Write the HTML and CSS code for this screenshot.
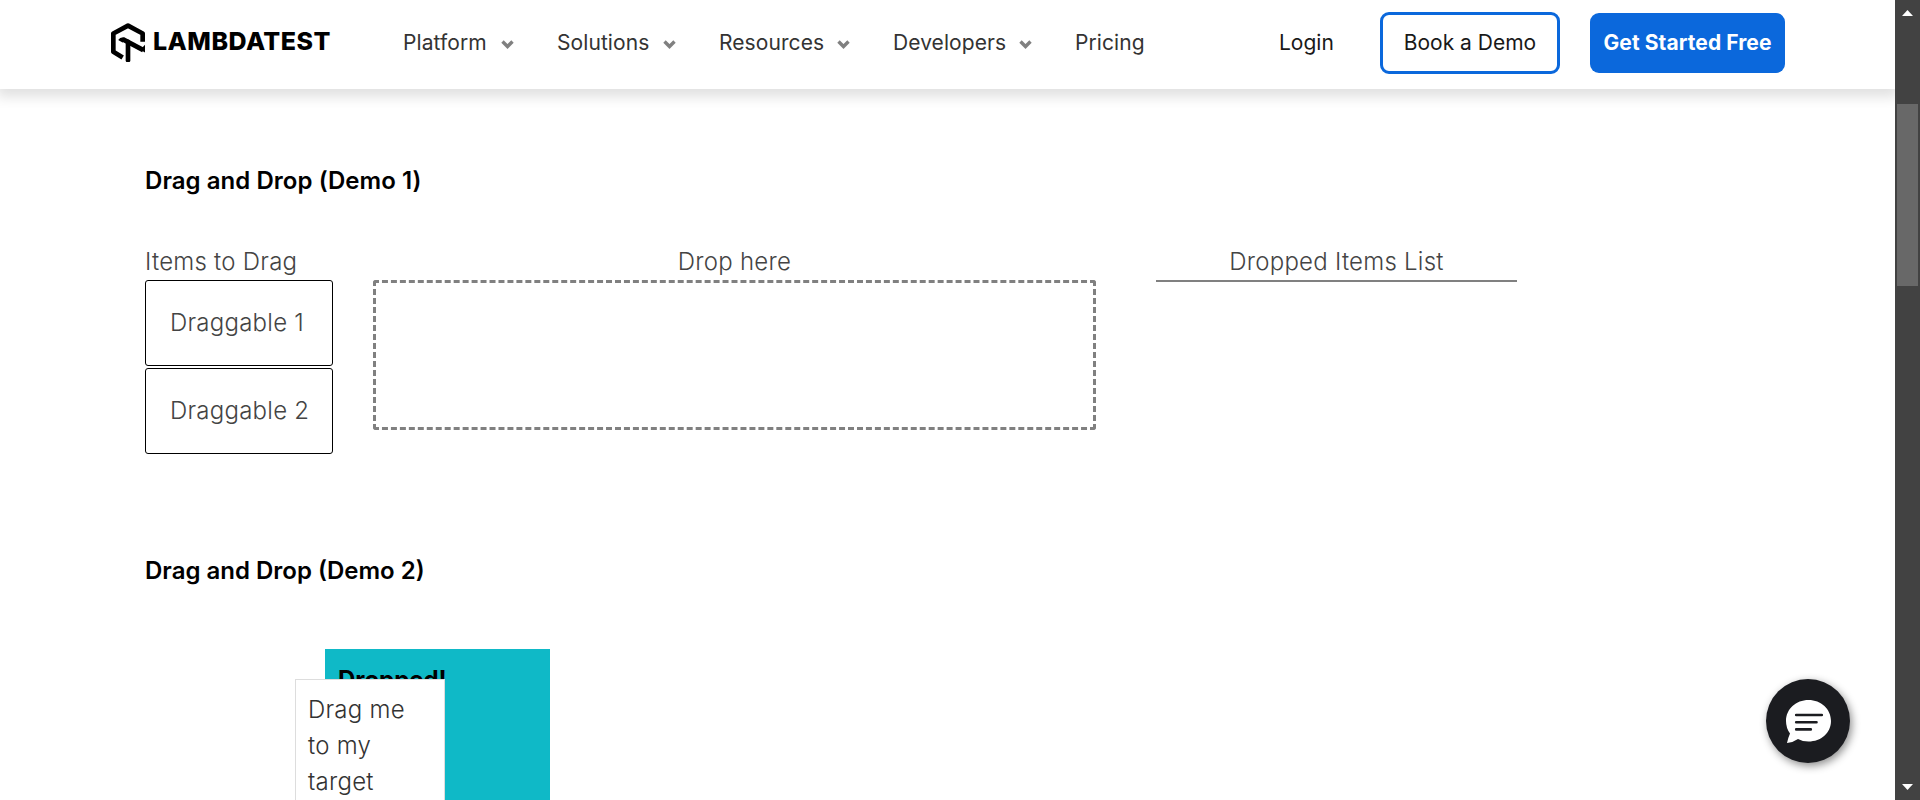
FILE: index.html
```html
<!DOCTYPE html>
<html lang="en">
<head>
<meta charset="utf-8">
<title>Drag and Drop</title>
<link rel="stylesheet" href="styles.css">
</head>
<body>
<div class="window">
  <div class="page">
    <header class="header">
      <a class="logo">
        <svg class="logo-mark" viewBox="0 0 102 116" fill="none" stroke="#000" stroke-width="14" stroke-linejoin="round">
          <path d="M95 56V31L51 7.500L7 31V86L35 103"/>
          <path d="M28 54Q31 49 39 50L97 81" stroke-width="15"/>
          <path d="M51 56V111" stroke-width="14" stroke-linecap="round"/>
          <path d="M102 65V88L88 80Z" fill="#000" stroke="none"/>
        </svg>
        <span class="logo-text">LAMBDATEST</span>
      </a>
      <nav class="nav">
        <a class="nav-item platform"><span>Platform</span><svg class="chev" viewBox="0 0 13 9"><path d="M1.500 1.500L6.500 6.500L11.500 1.500"/></svg></a>
        <a class="nav-item solutions"><span>Solutions</span><svg class="chev" viewBox="0 0 13 9"><path d="M1.500 1.500L6.500 6.500L11.500 1.500"/></svg></a>
        <a class="nav-item resources"><span>Resources</span><svg class="chev" viewBox="0 0 13 9"><path d="M1.500 1.500L6.500 6.500L11.500 1.500"/></svg></a>
        <a class="nav-item developers"><span>Developers</span><svg class="chev" viewBox="0 0 13 9"><path d="M1.500 1.500L6.500 6.500L11.500 1.500"/></svg></a>
        <a class="nav-item"><span>Pricing</span></a>
      </nav>
      <div class="actions">
        <a class="login">Login</a>
        <a class="btn demo">Book a Demo</a>
        <a class="btn start">Get Started Free</a>
      </div>
    </header>
    <main class="content">
      <h2 class="title">Drag and Drop (Demo 1)</h2>
      <div class="demo-one">
        <div class="items">
          <div class="label">Items to Drag</div>
          <div class="drag">Draggable 1</div>
          <div class="drag">Draggable 2</div>
        </div>
        <div class="drop">
          <div class="label">Drop here</div>
          <div class="dropzone"></div>
        </div>
        <div class="list">
          <div class="label">Dropped Items List</div>
          <div class="rule"></div>
        </div>
      </div>
      <h2 class="title second">Drag and Drop (Demo 2)</h2>
      <div class="target">
        <p class="dropped">Dropped!</p>
        <div class="dragged">Drag me<br>to my<br>target</div>
      </div>
    </main>
    <div class="chat">
      <svg viewBox="0 0 84 84">
        <path fill="#fff" d="M42.500 21C55 21 65 30 65 42S55 62.500 42.500 62.500Q36.500 62.500 32 60Q27 63.500 21 64Q22 59 24 54.500Q20 49 20 42C20 30 30 21 42.500 21Z"/>
        <path stroke="#1b1c20" stroke-width="2.600" stroke-linecap="round" d="M30.200 36H55.800M30.200 43.200H50.500M30.200 50.400H44.800"/>
      </svg>
    </div>
  </div>
  <div class="scrollbar">
    <svg class="arrow" viewBox="0 0 11 6"><path d="M5.500 0L11 6H0Z"/></svg>
    <div class="thumb"></div>
    <svg class="arrow bottom" viewBox="0 0 11 6"><path d="M0 0H11L5.500 6Z"/></svg>
  </div>
</div>
</body>
</html>
```

FILE: styles.css
```css
* { box-sizing: border-box; }
html { overflow: hidden; }
body { margin: 0; background: #fff; font-family: Inter, "Liberation Sans", sans-serif; }
.window { display: flex; width: 1920px; height: 800px; overflow: hidden; }
.page { position: relative; width: 1895px; height: 800px; overflow: hidden; }
.header { display: flex; height: 89px; padding: 0 110px 0 111px; align-items: flex-start; background: #fff; box-shadow: 0 5px 12px 3px rgba(0,0,0,.12); }
.logo { display: flex; width: 292px; padding-top: 23px; gap: 8px; }
.logo-mark { width: 34px; height: 39px; flex: none; }
.logo-text { font-size: 25px; font-weight: 800; line-height: 36px; letter-spacing: .48px; color: #000; white-space: nowrap; }
.nav { display: flex; flex: 1; line-height: 30px; padding-top: 28px; font-size: 21px; font-weight: 420; letter-spacing: .08px; color: #333; }
.nav-item { display: flex; justify-content: space-between; align-items: center; margin-right: 43px; white-space: nowrap; }
.platform { width: 111px; }
.solutions { width: 119px; }
.resources { width: 131px; }
.developers { width: 139px; }
.chev { width: 13px; height: 9px; margin-top: 3px; fill: none; stroke: #808080; stroke-width: 3.4; }
.actions { display: flex; font-size: 21px; font-weight: 420; color: #191919; white-space: nowrap; }
.login { width: 101px; line-height: 30px; padding-top: 28px; }
.btn { display: flex; align-items: center; justify-content: center; border-radius: 9px; }
.demo { width: 180px; height: 62px; margin: 12px 30px 0 0; padding-bottom: 1px; border: 3px solid #0b68dc; }
.start { width: 195px; height: 60px; margin-top: 13px; padding-bottom: 1px; background: #0b68dc; color: #fff; font-weight: 650; letter-spacing: .08px; }
.content { padding: 74px 0 0 145px; font-size: 24px; line-height: 36px; color: #444; font-weight: 330; letter-spacing: .24px; white-space: nowrap; }
.title { margin: 0; font-size: 24px; font-weight: 600; line-height: 36px; color: #000; letter-spacing: .05px; }
.demo-one { display: flex; margin-top: 45px; height: 210px; }
.label { text-align: center; line-height: 36px; }
.items { width: 188px; margin-right: 40px; }
.items .label { text-align: left; }
.drag { height: 86px; margin-bottom: 2px; padding: 24px; border: 1px solid #000; border-radius: 3px; }
.drop { width: 723px; margin-right: 60px; }
.dropzone { height: 150px; border: 3px dashed #808080; border-radius: 3px; }
.list { width: 361px; }
.rule { height: 2px; background: #808080; }
.second { margin-top: 99px; letter-spacing: 0; }
.target { position: relative; width: 225px; height: 225px; margin: 60px 0 0 180px; padding: 13px; background: #0fb9c7; }
.dropped { margin: 0; font-weight: 700; letter-spacing: -.05px; color: #000; }
.dragged { position: absolute; left: -30px; top: 30px; width: 150px; height: 150px; padding: 12px; border: 1px solid #ddd; background: #fff; color: #333; }
.chat { position: absolute; left: 1766px; top: 679px; width: 84px; height: 84px; border-radius: 50%; background: #1b1c20; box-shadow: 2px 3px 8px rgba(0,0,0,.45); }
.chat svg { display: block; width: 84px; height: 84px; }
.scrollbar { display: flex; flex-direction: column; align-items: center; width: 25px; height: 800px; padding: 10px 0; background: #424242; }
.arrow { width: 11px; height: 6px; fill: #fff; }
.thumb { width: 21px; height: 182px; margin-top: 88px; background: #686868; }
.bottom { margin-top: auto; }
```
